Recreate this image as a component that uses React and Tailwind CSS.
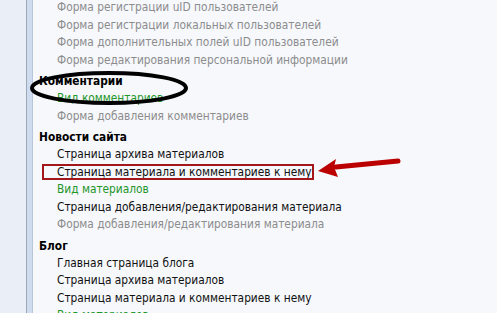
export default function App() {
  const rows = [
    { t: "Форма регистрации uID пользователей", c: "gray" },
    { t: "Форма регистрации локальных пользователей", c: "gray" },
    { t: "Форма дополнительных полей uID пользователей", c: "gray" },
    { t: "Форма редактирования персональной информации", c: "gray" },
    { t: "Комментарии", h: true },
    { t: "Вид комментариев", c: "green" },
    { t: "Форма добавления комментариев", c: "gray" },
    { t: "Новости сайта", h: true },
    { t: "Страница архива материалов", c: "black" },
    { t: "Страница материала и комментариев к нему", c: "black", box: true },
    { t: "Вид материалов", c: "green" },
    { t: "Страница добавления/редактирования материала", c: "black" },
    { t: "Форма добавления/редактирования материала", c: "gray" },
    { t: "Блог", h: true },
    { t: "Главная страница блога", c: "black" },
    { t: "Страница архива материалов", c: "black" },
    { t: "Страница материала и комментариев к нему", c: "black" },
    { t: "Вид материалов", c: "green" },
  ];
  const color = { gray: "text-[#8c8c8c]", green: "text-[#23962a]", black: "text-[#111]" };

  return (
    <div className="relative flex h-[313px] w-[497px] overflow-hidden bg-[#f6f8fc] font-['DejaVu_Sans_Condensed','DejaVu_Sans',sans-serif] font-stretch-condensed text-[11.8px]">
      <div className="w-[26px] shrink-0 bg-[#e9eef7]" />
      <div className="w-px shrink-0 bg-[#9ea7b6]" />
      <div className="w-[5px] shrink-0 bg-[#cfdcef]" />
      <div className="w-px shrink-0 bg-[#b9c6da]" />
      <div className="-mt-px flex flex-col pl-[6px]">
        {rows.map((r, i) =>
          r.h ? (
            <div key={i} className="mt-[4px] leading-[17px] font-bold text-black">
              {r.t}
            </div>
          ) : (
            <div key={i} className={`pl-[18px] leading-[17.5px] ${color[r.c]}`}>
              <span className={r.box ? "relative" : ""}>
                {r.t}
                {r.box && (
                  <span className="absolute -left-[15px] -right-[3px] -top-[1px] -bottom-[1px] border-2 border-[#a3161a]" />
                )}
              </span>
            </div>
          )
        )}
      </div>

      <svg className="absolute left-0 top-0" width="497" height="313">
        <ellipse cx="109" cy="88" rx="77" ry="15" fill="none" stroke="#000" strokeWidth="4" />
        <path d="M398 161 L336 167" stroke="#bb0000" strokeWidth="5" strokeLinecap="round" />
        <path d="M318 171 L336 159 L334 167 L338 177 Z" fill="#bb0000" />
      </svg>
    </div>
  );
}
